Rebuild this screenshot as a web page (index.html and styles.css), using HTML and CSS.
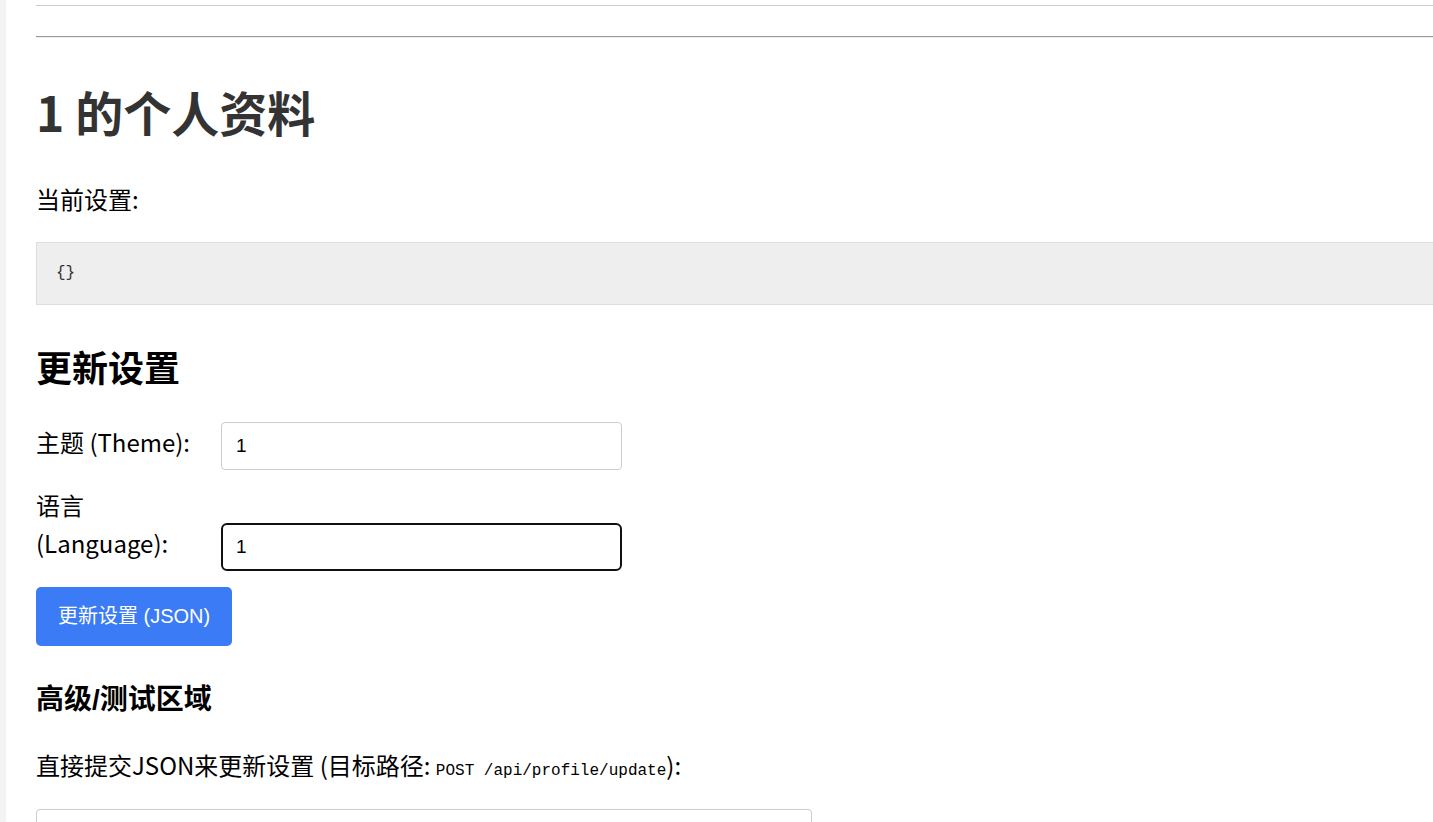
FILE: index.html
```html
<!DOCTYPE html>
<html lang="zh-CN">
<head>
    <meta charset="UTF-8">
    <meta name="viewport" content="width=device-width, initial-scale=1.0">
    <title>个人资料</title>
    <link rel="stylesheet" href="styles.css">
</head>
<body>
    <div class="frame">
        <div class="page">
            <div class="topbar"></div>
            <hr class="divider">

            <h1>1 的个人资料</h1>

            <p class="current-label">当前设置:</p>
            <pre class="settings-box">{}</pre>

            <h2>更新设置</h2>

            <form id="settingsForm" class="settings-form">
                <div class="form-row"><label class="field-label" for="theme">主题 (Theme):</label><input class="field-input" type="text" id="theme" name="theme" value="1"></div>
                <div class="form-row"><label class="field-label" for="language">语言 (Language):</label><input class="field-input is-focused" type="text" id="language" name="language" value="1"></div>
                <button type="submit" class="submit-btn">更新设置 (JSON)</button>
            </form>

            <h3>高级/测试区域</h3>

            <p class="raw-label">直接提交JSON来更新设置 (目标路径: <code>POST /api/profile/update</code>):</p>
            <textarea class="raw-json"></textarea>
        </div>
    </div>
</body>
</html>
```

FILE: styles.css
```css
html, body {
    margin: 0;
    padding: 0;
    overflow: hidden;
    background-color: #fff;
}

body {
    font-family: "Noto Sans CJK SC", "Noto Sans", sans-serif;
    font-size: 24px;
    color: #000;
}

.frame {
    border-left: 6px solid #f3f3f3;
    min-height: 822px;
}

.page {
    width: 1600px;
    padding-left: 30px;
}

.topbar {
    height: 5px;
    border-bottom: 1px solid #ccc;
}

.divider {
    margin: 30px 0 0;
    height: 0;
    border: none;
    border-top: 1px solid #9a9a9a;
    border-bottom: 1px solid #eee;
}

h1 {
    margin: 45px 0 0;
    font-size: 48px;
    line-height: 1.2;
    color: #333;
}

.current-label {
    margin: 40px 0 0;
    line-height: 36px;
}

.settings-box {
    margin: 25px 0 0;
    padding: 20px 19px;
    background-color: #eee;
    border: 1px solid #ddd;
    font-family: "Liberation Mono", monospace;
    font-size: 16px;
    line-height: 21px;
    color: #333;
}

h2 {
    margin: 40px 0 0;
    font-size: 36px;
    line-height: 1.2;
}

.settings-form {
    margin-top: 34px;
}

.form-row {
    margin-bottom: 16px;
    line-height: 38px;
}

.field-label {
    display: inline-block;
    width: 170px;
    margin-right: 15px;
    vertical-align: baseline;
}

.field-input {
    box-sizing: border-box;
    width: 401px;
    height: 48px;
    padding: 0 14px;
    border: 1px solid #ccc;
    border-radius: 4px;
    font-family: "Liberation Sans", sans-serif;
    font-size: 19px;
    color: #000;
    vertical-align: baseline;
}

.field-input.is-focused {
    border: 2px solid #111;
    border-radius: 6px;
    padding: 0 13px;
    outline: none;
}

.submit-btn {
    display: block;
    padding: 18px 22px;
    background-color: #3b7bf6;
    color: #fff;
    border: none;
    border-radius: 5px;
    font-family: "Liberation Sans", "Noto Sans CJK SC", sans-serif;
    font-size: 20px;
    line-height: 23px;
    cursor: pointer;
}

h3 {
    margin: 37px 0 0;
    font-family: "Liberation Sans", "Noto Sans CJK SC", sans-serif;
    font-size: 28px;
    line-height: 1.2;
}

.raw-label {
    margin: 31px 0 0;
    line-height: 36px;
}

.raw-label code {
    font-family: "Liberation Mono", monospace;
    font-size: 16px;
}

.raw-json {
    display: block;
    box-sizing: border-box;
    margin-top: 20px;
    width: 776px;
    height: 160px;
    border: 1px solid #ccc;
    border-radius: 4px;
    resize: none;
}
```
